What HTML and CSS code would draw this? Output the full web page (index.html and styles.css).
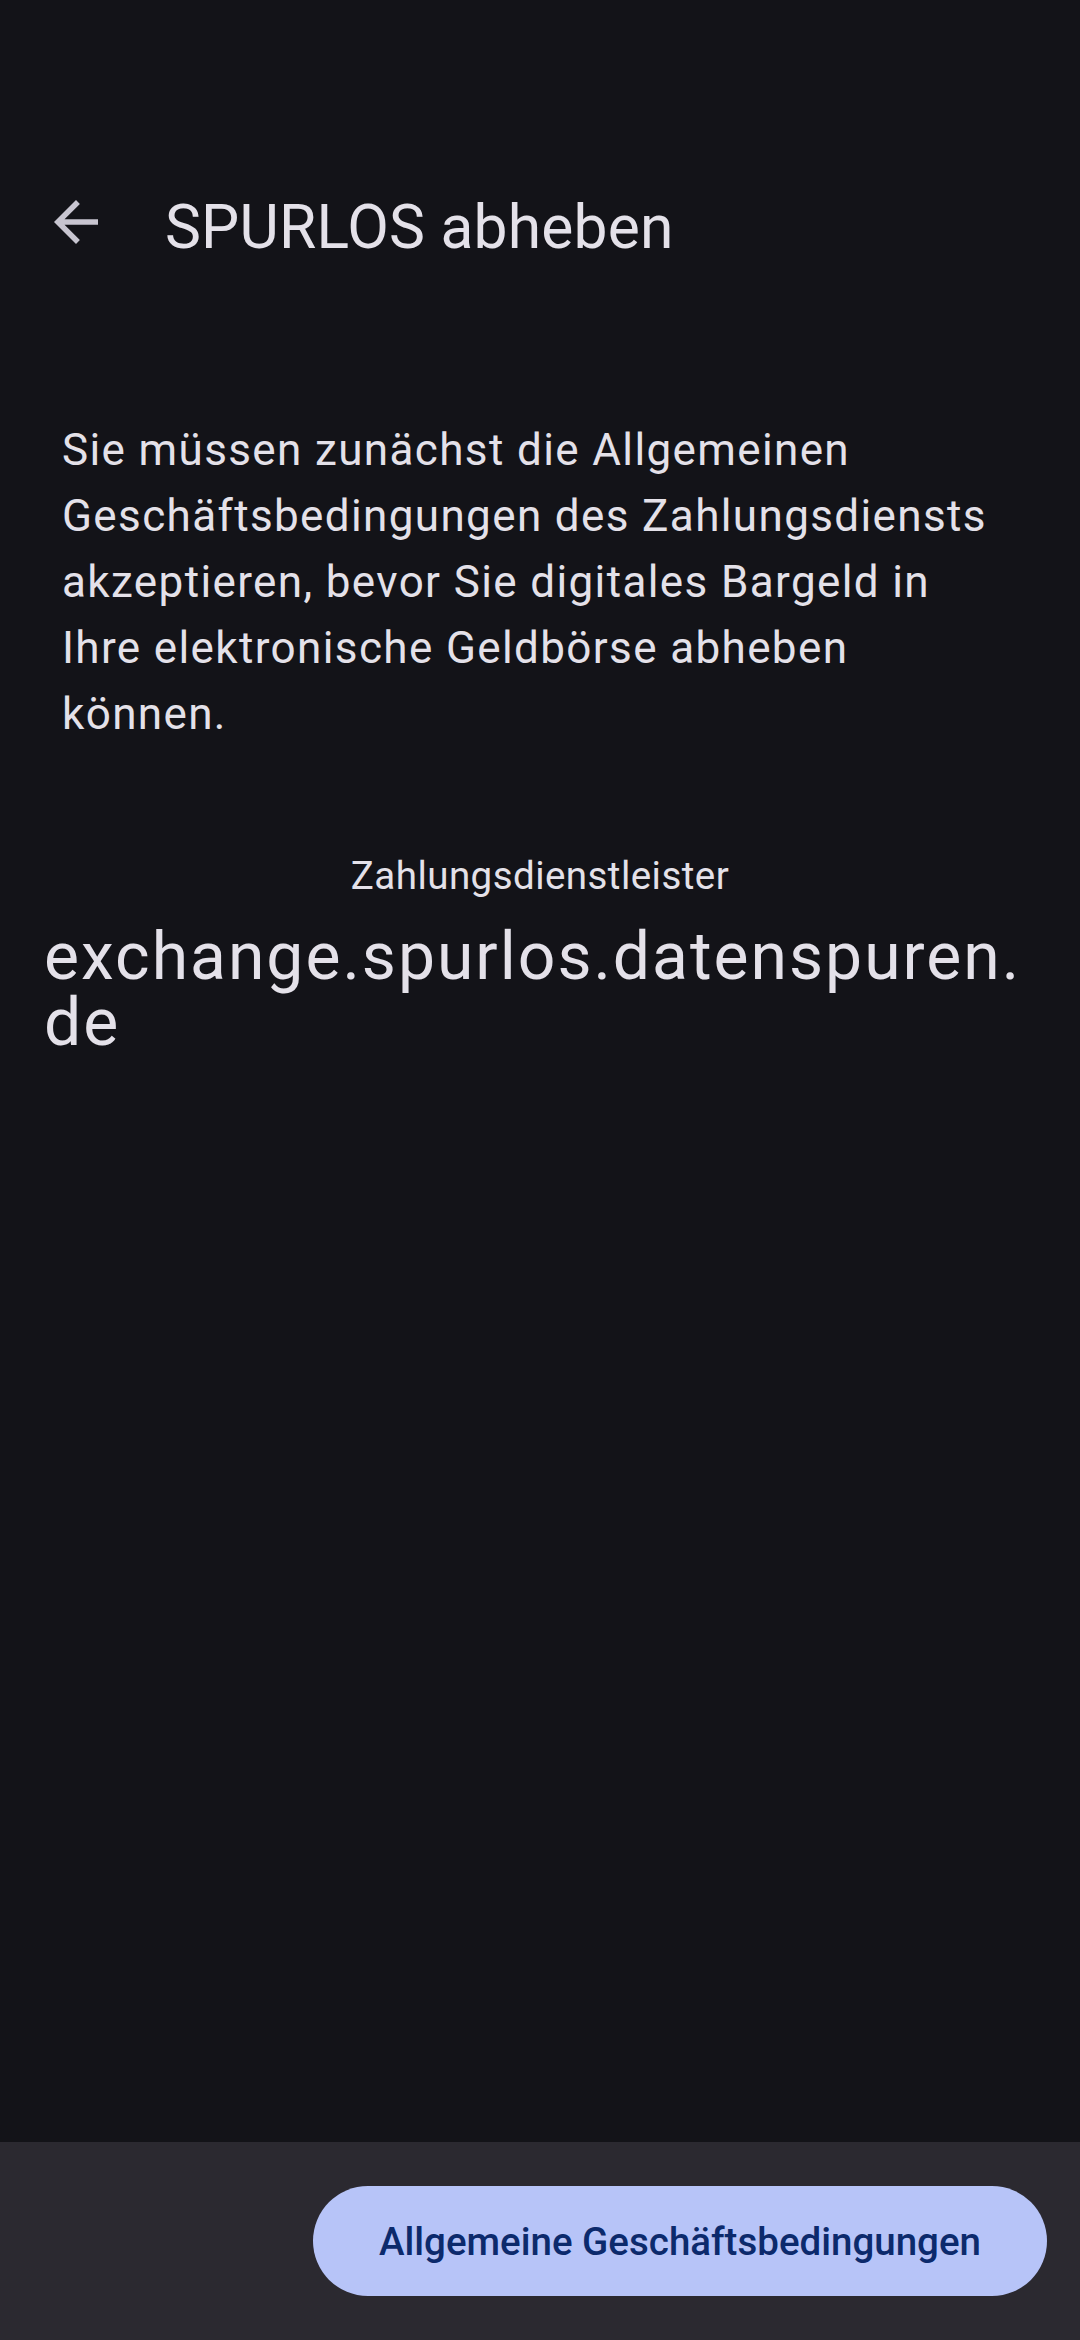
FILE: index.html
```html
<!DOCTYPE html>
<html lang="de">
<head>
<meta charset="utf-8">
<title>SPURLOS abheben</title>
<link rel="stylesheet" href="styles.css">
</head>
<body>
<div class="screen">
  <div class="statusbar"></div>
  <header class="toolbar">
    <div class="nav-icon">
      <svg viewBox="0 0 24 24" width="66" height="66"><path d="M20 11H7.83l5.59-5.59L12 4l-8 8 8 8 1.41-1.41L7.83 13H20v-2z" fill="currentColor"/></svg>
    </div>
    <h1 class="title">SPURLOS abheben</h1>
  </header>
  <main class="content">
    <p class="intro">Sie müssen zunächst die Allgemeinen Geschäftsbedingungen des Zahlungsdiensts akzeptieren, bevor Sie digitales Bargeld in Ihre elektronische Geldbörse abheben können.</p>
    <p class="label">Zahlungsdienstleister</p>
    <p class="domain">exchange.<wbr>spurlos.<wbr>datenspuren.<wbr>de</p>
  </main>
  <footer class="bottombar">
    <button class="tos-button">Allgemeine Geschäftsbedingungen</button>
  </footer>
</div>
</body>
</html>
```
FILE: styles.css
```css
* { box-sizing: border-box; }
html, body {
  margin: 0;
  padding: 0;
  background: #131318;
}
body {
  font-family: Roboto, "Noto Sans", "Liberation Sans", sans-serif;
  color: #e4e1e9;
}
.screen {
  width: 1080px;
  height: 2340px;
  display: flex;
  flex-direction: column;
  background: #131318;
}
.statusbar {
  height: 134px;
  flex: none;
}
.toolbar {
  height: 176px;
  flex: none;
  display: flex;
  align-items: flex-start;
  padding-top: 55px;
  padding-left: 43px;
}
.nav-icon {
  width: 66px;
  height: 66px;
  color: #c8c5d0;
  flex: none;
}
.nav-icon svg { display: block; }
.title {
  margin: 0 0 0 56px;
  font-size: 60.5px;
  line-height: 77px;
  font-weight: 400;
  letter-spacing: 0.2px;
  color: #e4e1e9;
}
.content {
  flex: 1;
  display: flex;
  flex-direction: column;
  padding-top: 107px;
}
.intro {
  margin: 0 0 0 62px;
  width: 945px;
  font-size: 44px;
  line-height: 66px;
  letter-spacing: 1.375px;
  color: #e4e1e9;
}
.label {
  margin: 101px 0 0 0;
  text-align: center;
  font-size: 38.5px;
  line-height: 55px;
  letter-spacing: 0.45px;
  color: #e4e1e9;
}
.domain {
  margin: 21px 44px 0 44px;
  font-size: 66px;
  line-height: 66px;
  letter-spacing: 2px;
  color: #e4e1e9;
}
.bottombar {
  height: 198px;
  flex: none;
  background: #2b2930;
  display: flex;
  justify-content: flex-end;
  align-items: center;
  padding-right: 33px;
}
.tos-button {
  height: 110px;
  padding: 0 66px;
  border: none;
  border-radius: 55px;
  background: #b7c4f8;
  color: #0c2a6c;
  font-family: Roboto, "Noto Sans", "Liberation Sans", sans-serif;
  font-size: 38.5px;
  font-weight: 500;
  letter-spacing: 0;
}
```
